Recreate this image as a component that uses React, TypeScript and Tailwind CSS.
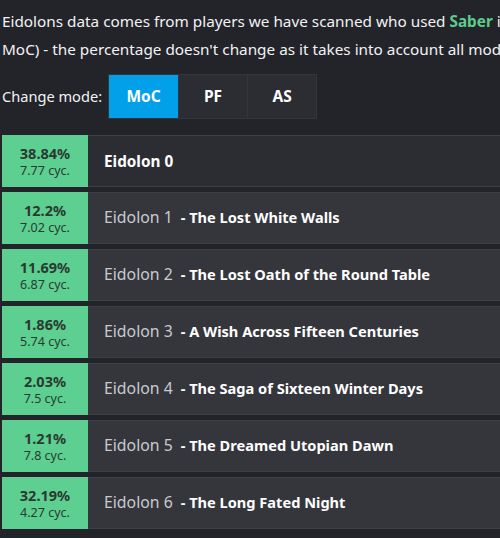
import React, { useState } from 'react';

const rows = [
  { pct: '38.84%', cyc: '7.77 cyc.', e: 0, name: '' },
  { pct: '12.2%', cyc: '7.02 cyc.', e: 1, name: 'The Lost White Walls' },
  { pct: '11.69%', cyc: '6.87 cyc.', e: 2, name: 'The Lost Oath of the Round Table' },
  { pct: '1.86%', cyc: '5.74 cyc.', e: 3, name: 'A Wish Across Fifteen Centuries' },
  { pct: '2.03%', cyc: '7.5 cyc.', e: 4, name: 'The Saga of Sixteen Winter Days' },
  { pct: '1.21%', cyc: '7.8 cyc.', e: 5, name: 'The Dreamed Utopian Dawn' },
  { pct: '32.19%', cyc: '4.27 cyc.', e: 6, name: 'The Long Fated Night' },
];

const modes = ['MoC', 'PF', 'AS'];

export default function App() {
  const [mode, setMode] = useState('MoC');

  return (
    <div
      className="w-[500px] h-[538px] overflow-hidden bg-[#232429] text-[#f2f2f4]"
      style={{ fontFamily: '"Noto Sans", "Open Sans", sans-serif' }}
    >
      <div className="w-[700px] pl-[2px] pt-[7px]">
        <p className="text-[15.3px] leading-[28px] whitespace-nowrap">
          Eidolons data comes from players we have scanned who used{' '}
          <span className="font-bold text-[#5ccb8c]">Saber</span> in the selected mode (
          <br />
          MoC) - the percentage doesn't change as it takes into account all modes.
        </p>

        <div className="flex items-center mt-[11px] gap-[6px]">
          <span className="text-[14.6px]">Change mode:</span>
          <div className="flex border border-[#34353b] bg-[#2c2d33]">
            {modes.map((m, i) => (
              <button
                key={m}
                onClick={() => setMode(m)}
                className={`w-[69px] h-[43px] text-[15.5px] font-bold text-white ${
                  i > 0 ? 'border-l border-[#34353b]' : ''
                } ${mode === m ? 'bg-[#03a0ea]' : 'bg-[#2c2d33]'}`}
              >
                {m}
              </button>
            ))}
          </div>
        </div>

        <div className="mt-[16px] flex flex-col gap-[5px]">
          {rows.map((r) => (
            <div key={r.e} className="flex h-[52px]">
              <div className="w-[86px] bg-[#5ccf91] flex flex-col items-center justify-center text-[#2a3a31]">
                <span className="text-[14.5px] font-bold leading-[19px]">{r.pct}</span>
                <span className="text-[12.5px] leading-[16px]">{r.cyc}</span>
              </div>
              <div
                className={`flex-1 flex items-center pl-[16px] border-y border-[#3f4046] ${
                  r.e === 0 ? 'bg-[#2c2d33]' : 'bg-[#35363c]'
                }`}
              >
                {r.e === 0 ? (
                  <span className="font-bold text-white text-[15.3px]">Eidolon 0</span>
                ) : (
                  <>
                    <span className="text-[#c9cacf] text-[15.8px]">Eidolon {r.e}</span>
                    <span className="font-bold text-white text-[14.6px] ml-[8px]">- {r.name}</span>
                  </>
                )}
              </div>
            </div>
          ))}
        </div>
      </div>
    </div>
  );
}
